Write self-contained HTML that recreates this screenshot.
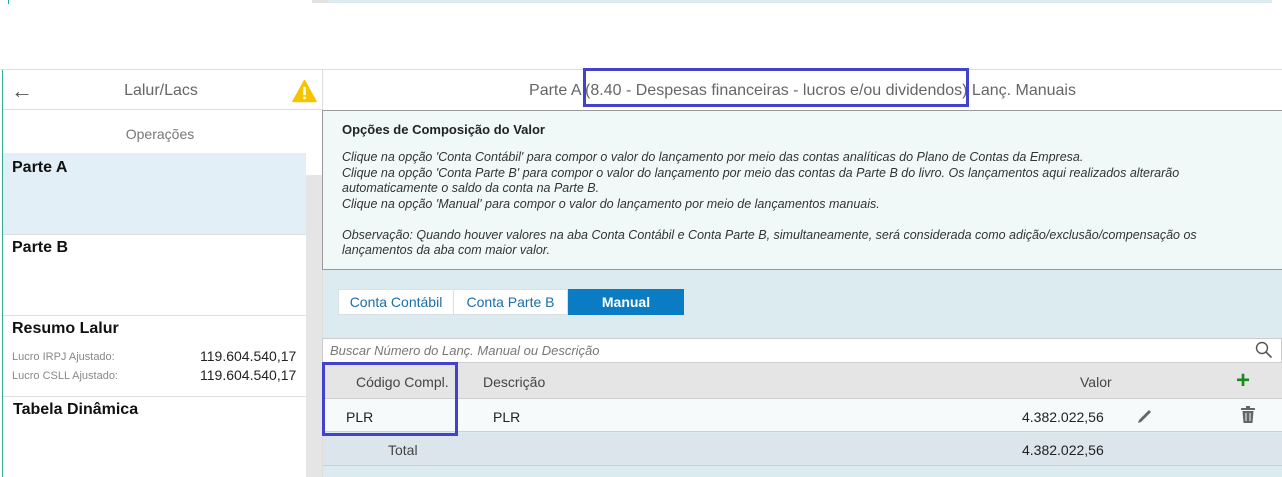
<!DOCTYPE html>
<html><head><meta charset="utf-8"><style>
*{box-sizing:border-box;margin:0;padding:0}
body{width:1282px;height:477px;overflow:hidden;background:#fff;font-family:"Liberation Sans",Arial,sans-serif;position:relative;color:#333}
.a{position:absolute}
</style></head><body>
<div class="a" style="left:8px;top:0;width:1px;height:4px;background:#2aa"></div>
<div class="a" style="left:312px;top:0;width:16px;height:3px;background:#e2e2e2"></div>
<div class="a" style="left:328px;top:0;width:944px;height:3px;background:#dcebf0"></div>
<div class="a" style="left:0;top:69px;width:1282px;height:1px;background:#ddd"></div>
<!-- left panel -->
<div class="a" style="left:2px;top:70px;width:1px;height:407px;background:#3a9"></div>
<div class="a" style="left:3px;top:70px;width:319px;height:40px;border-bottom:1px solid #ddd"></div>
<div class="a" style="left:11px;top:78px;font-size:22px;color:#555">&#8592;</div>
<div class="a" style="left:0;top:82px;width:322px;text-align:center;font-size:16px;color:#666">Lalur/Lacs</div>
<svg class="a" style="left:292px;top:79px" width="25" height="24" viewBox="0 0 24 22"><path d="M12 1L23 21H1Z" fill="#f5c400" stroke="#f5c400" stroke-linejoin="round" stroke-width="1.5"/><rect x="10.8" y="7" width="2.4" height="8" fill="#fff"/><rect x="10.8" y="16.5" width="2.4" height="2.4" fill="#fff"/></svg>
<div class="a" style="left:0;top:126px;width:320px;text-align:center;font-size:14px;color:#777">Operações</div>
<div class="a" style="left:306px;top:175px;width:16px;height:302px;background:#e5e5e5"></div>
<div class="a" style="left:3px;top:153px;width:303px;height:81px;background:#e3eff7"></div>
<div class="a" style="left:12px;top:159px;font-size:16px;font-weight:bold;color:#111">Parte A</div>
<div class="a" style="left:3px;top:234px;width:303px;height:1px;background:#ddd"></div>
<div class="a" style="left:12px;top:239px;font-size:16px;font-weight:bold;color:#111">Parte B</div>
<div class="a" style="left:3px;top:315px;width:303px;height:1px;background:#ddd"></div>
<div class="a" style="left:12px;top:320px;font-size:16px;font-weight:bold;color:#111">Resumo Lalur</div>
<div class="a" style="left:12px;top:351px;font-size:11px;color:#888">Lucro IRPJ Ajustado:</div>
<div class="a" style="left:12px;top:370px;font-size:11px;color:#888">Lucro CSLL Ajustado:</div>
<div class="a" style="left:200px;top:348px;font-size:14px;color:#222">119.604.540,17</div>
<div class="a" style="left:200px;top:367px;font-size:14px;color:#222">119.604.540,17</div>
<div class="a" style="left:3px;top:396px;width:303px;height:1px;background:#ddd"></div>
<div class="a" style="left:13px;top:401px;font-size:16px;font-weight:bold;color:#111">Tabela Dinâmica</div>
<!-- right -->
<div class="a" style="left:322px;top:70px;width:1px;height:407px;background:#ddd"></div>
<div class="a" style="left:323px;top:82px;width:959px;text-align:center;font-size:16px;color:#666">Parte A (8.40 - Despesas financeiras - lucros e/ou dividendos) Lanç. Manuais</div>
<div class="a" style="left:583px;top:68px;width:386px;height:39px;border:3px solid #4242cc"></div>
<div class="a" style="left:322px;top:110px;width:960px;height:160px;background:#f0f8f8;border:1px solid #999;border-right:none"></div>
<div class="a" style="left:342px;top:122px;font-size:13px;font-weight:bold;color:#222">Opções de Composição do Valor</div>
<div class="a" style="left:342px;top:150px;font-size:12.5px;font-style:italic;color:#333;line-height:15.5px;white-space:nowrap">Clique na opção 'Conta Contábil' para compor o valor do lançamento por meio das contas analíticas do Plano de Contas da Empresa.<br>Clique na opção 'Conta Parte B' para compor o valor do lançamento por meio das contas da Parte B do livro. Os lançamentos aqui realizados alterarão<br>automaticamente o saldo da conta na Parte B.<br>Clique na opção 'Manual' para compor o valor do lançamento por meio de lançamentos manuais.<br><br>Observação: Quando houver valores na aba Conta Contábil e Conta Parte B, simultaneamente, será considerada como adição/exclusão/compensação os<br>lançamentos da aba com maior valor.</div>
<div class="a" style="left:323px;top:270px;width:959px;height:207px;background:#dcebf0"></div>
<div class="a" style="left:338px;top:289px;width:116px;height:26px;background:#fff;border:1px solid #d8e0e4;font-size:14px;color:#1a6fa8;text-align:center;line-height:24px">Conta Contábil</div>
<div class="a" style="left:454px;top:289px;width:114px;height:26px;background:#fff;border:1px solid #d8e0e4;border-left:none;font-size:14px;color:#1a6fa8;text-align:center;line-height:24px">Conta Parte B</div>
<div class="a" style="left:568px;top:289px;width:116px;height:26px;background:#0a7cc4;font-size:14px;font-weight:bold;color:#fff;text-align:center;line-height:26px">Manual</div>
<div class="a" style="left:322px;top:338px;width:960px;height:25px;background:#fff;border:1px solid #ccc"></div>
<div class="a" style="left:330px;top:343px;font-size:13px;font-style:italic;color:#777">Buscar Número do Lanç. Manual ou Descrição</div>
<svg class="a" style="left:1255px;top:341px" width="18" height="18" viewBox="0 0 18 18"><circle cx="7" cy="7" r="5.5" fill="none" stroke="#555" stroke-width="1.4"/><path d="M11 11L16.5 16.5" stroke="#555" stroke-width="1.6"/></svg>
<div class="a" style="left:323px;top:364px;width:959px;height:35px;background:#e5e5e5;border-bottom:1px solid #d0d0d0"></div>
<div class="a" style="left:356px;top:374px;font-size:14px;color:#444">Código Compl.</div>
<div class="a" style="left:483px;top:374px;font-size:14px;color:#444">Descrição</div>
<div class="a" style="left:1080px;top:374px;font-size:14px;color:#444">Valor</div>
<div class="a" style="left:1236px;top:369px;font-size:24px;font-weight:bold;color:#1a8a1a;line-height:24px">+</div>
<div class="a" style="left:323px;top:399px;width:959px;height:33px;background:#f6fafb;border-bottom:1px solid #d0d0d0"></div>
<div class="a" style="left:346px;top:409px;font-size:14px;color:#222">PLR</div>
<div class="a" style="left:493px;top:409px;font-size:14px;color:#222">PLR</div>
<div class="a" style="left:1022px;top:409px;font-size:14px;color:#222">4.382.022,56</div>
<svg class="a" style="left:1136px;top:407px" width="18" height="18" viewBox="0 0 18 18"><path d="M2 16L3 13L13 3L15 5L5 15Z" fill="#666"/></svg>
<svg class="a" style="left:1240px;top:406px" width="16" height="18" viewBox="0 0 16 18"><rect x="1" y="2" width="14" height="2" fill="#666"/><rect x="6" y="0" width="4" height="2" fill="#666"/><path d="M2.5 5H13.5L12.5 17H3.5Z" fill="#666"/><path d="M6 7V15M10 7V15" stroke="#f6fafb" stroke-width="1"/></svg>
<div class="a" style="left:323px;top:433px;width:959px;height:33px;background:#dde5ec;border-bottom:1px solid #c8d0d8"></div>
<div class="a" style="left:388px;top:442px;font-size:14px;color:#444">Total</div>
<div class="a" style="left:1022px;top:442px;font-size:14px;color:#222">4.382.022,56</div>
<div class="a" style="left:322px;top:362px;width:136px;height:74px;border:3px solid #4242cc"></div>
</body></html>
